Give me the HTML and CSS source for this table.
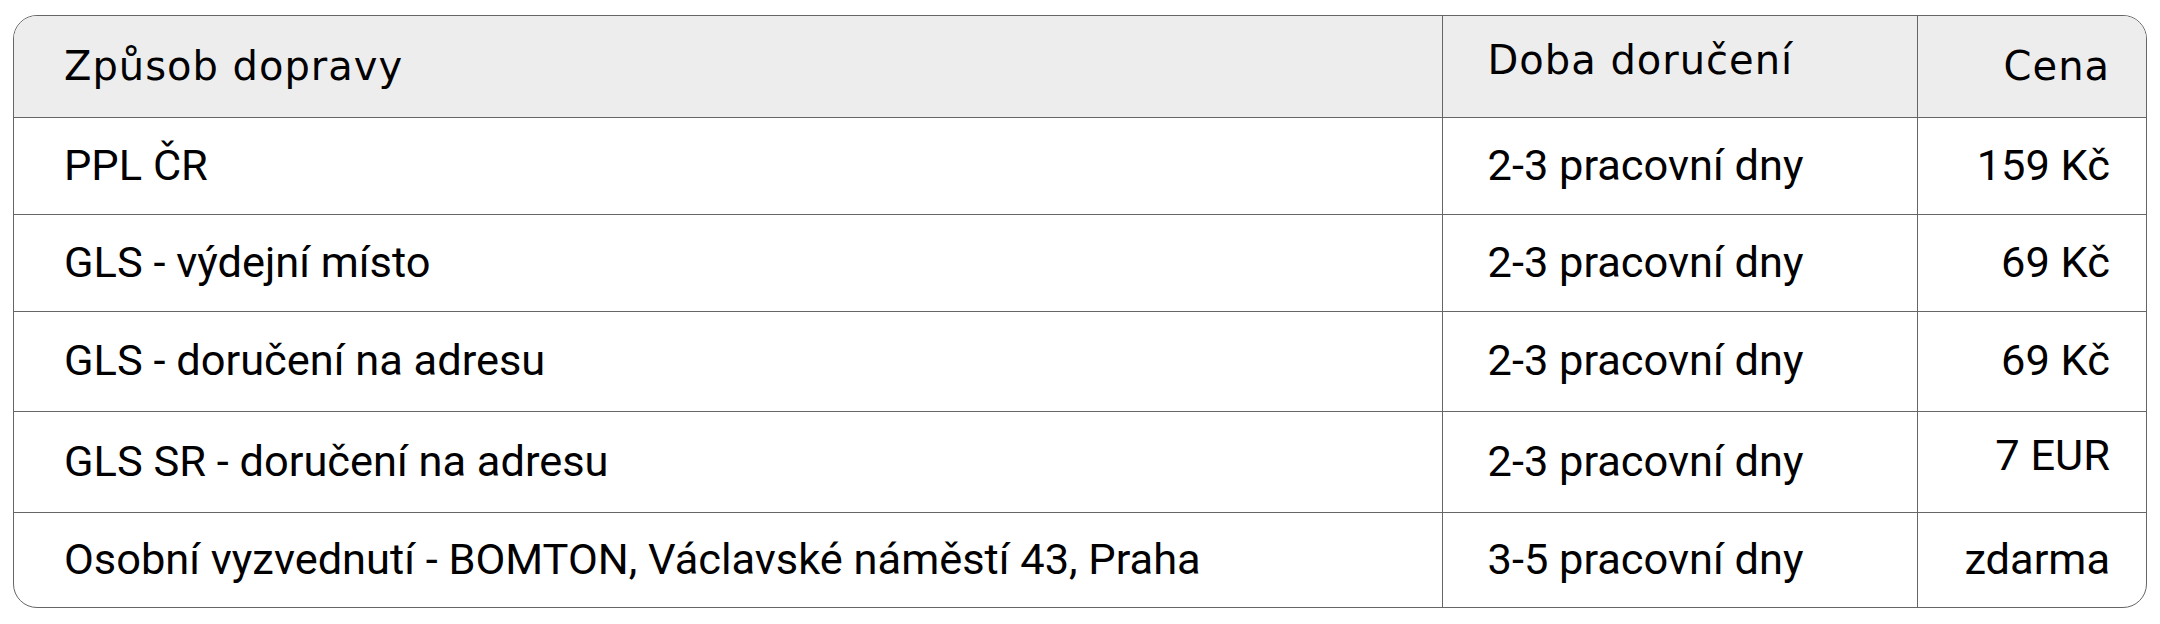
FILE: index.html
```html
<!DOCTYPE html>
<html lang="cs">
<head>
<meta charset="utf-8">
<title>Doprava</title>
<link rel="stylesheet" href="styles.css">
</head>
<body>
<div class="wrap">
  <table class="ship">
    <colgroup>
      <col class="c1"><col class="c2"><col class="c3">
    </colgroup>
    <thead>
      <tr>
        <th class="left">Způsob dopravy</th>
        <th class="mid raised-head">Doba doručení</th>
        <th class="right">Cena</th>
      </tr>
    </thead>
    <tbody>
      <tr>
        <td class="left">PPL ČR</td>
        <td class="mid">2-3 pracovní dny</td>
        <td class="right">159 Kč</td>
      </tr>
      <tr>
        <td class="left">GLS - výdejní místo</td>
        <td class="mid">2-3 pracovní dny</td>
        <td class="right">69 Kč</td>
      </tr>
      <tr class="r-tall">
        <td class="left">GLS - doručení na adresu</td>
        <td class="mid">2-3 pracovní dny</td>
        <td class="right">69 Kč</td>
      </tr>
      <tr class="r-taller">
        <td class="left">GLS SR - doručení na adresu</td>
        <td class="mid">2-3 pracovní dny</td>
        <td class="right raised">7 EUR</td>
      </tr>
      <tr class="r-short">
        <td class="left">Osobní vyzvednutí - BOMTON, Václavské náměstí 43, Praha</td>
        <td class="mid">3-5 pracovní dny</td>
        <td class="right">zdarma</td>
      </tr>
    </tbody>
  </table>
</div>
</body>
</html>
```
FILE: styles.css
```css
html, body {
  margin: 0;
  padding: 0;
  background: #ffffff;
}
body {
  padding: 15px 13px 0 13px;
  font-family: Roboto, "Liberation Sans", Arial, sans-serif;
  color: #000;
}
.wrap {
  border: 1.5px solid #666666;
  border-radius: 24px;
  overflow: hidden;
}
.ship {
  width: 100%;
  border-collapse: collapse;
  table-layout: fixed;
}
.c1 { width: 1428px; }
.c2 { width: 475px; }
.c3 { width: auto; }
.ship th, .ship td {
  padding: 0;
  font-size: 43.4px;
  line-height: 50px;
  vertical-align: middle;
  border-left: 1.5px solid #666666;
  border-top: 1.5px solid #666666;
  box-sizing: border-box;
}
.ship th:first-child, .ship td:first-child { border-left: none; }
.ship thead th {
  border-top: none;
  background: #ededed;
  height: 101px;
  font-family: "DejaVu Sans", "Open Sans", sans-serif;
  font-weight: 400;
  font-size: 40px;
  letter-spacing: 1px;
  line-height: 47px;
}
.ship tbody td {
  height: 97px;
  font-weight: 400;
}
.ship .r-tall td { height: 100px; }
.ship .r-taller td { height: 101px; }
.ship .r-short td { height: 95px; }
.left { text-align: left; padding-left: 50px !important; }
.mid { text-align: left; padding-left: 45px !important; }
.right { text-align: right; padding-right: 36px !important; }
.ship .raised { vertical-align: top; padding-top: 19px; }
.ship .raised-head { vertical-align: top; padding-top: 21px; }
```
